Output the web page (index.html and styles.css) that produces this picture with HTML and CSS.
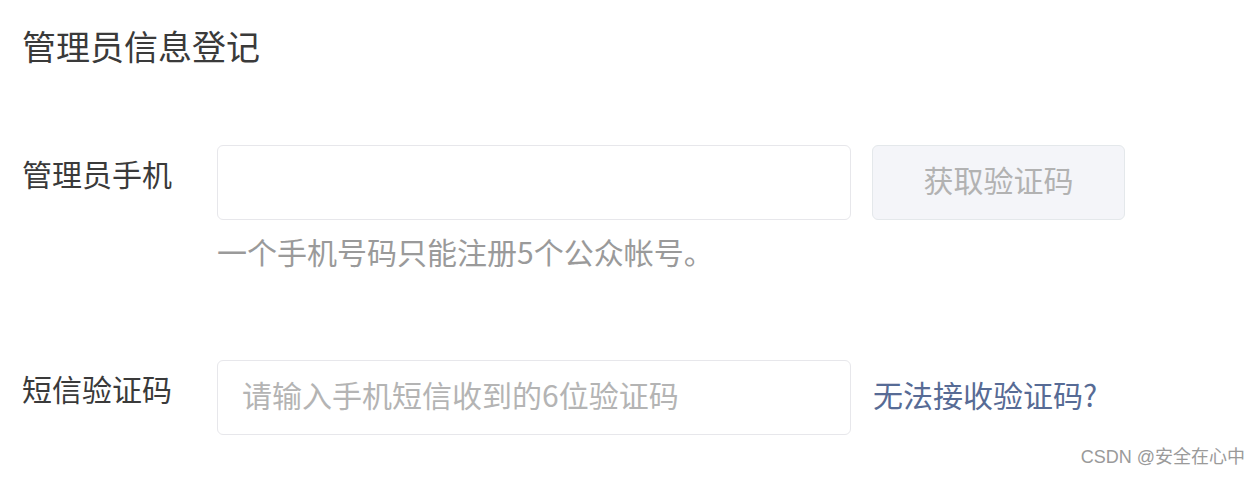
FILE: index.html
```html
<!DOCTYPE html>
<html lang="zh-CN">
<head>
<meta charset="utf-8">
<title>管理员信息登记</title>
<link rel="stylesheet" href="styles.css">
</head>
<body>
<div class="page">
  <h1 class="title">管理员信息登记</h1>
  <div class="form">
    <div class="row row-phone">
      <label class="label">管理员手机</label>
      <div class="field">
        <div class="controls">
          <input class="input" type="text">
          <button class="btn" type="button">获取验证码</button>
        </div>
        <p class="hint">一个手机号码只能注册5个公众帐号。</p>
      </div>
    </div>
    <div class="row row-code">
      <label class="label">短信验证码</label>
      <div class="field">
        <div class="controls">
          <input class="input" type="text" placeholder="请输入手机短信收到的6位验证码">
          <a class="link" href="#">无法接收验证码?</a>
        </div>
      </div>
    </div>
  </div>
</div>
<div class="watermark">CSDN @安全在心中</div>
</body>
</html>
```

FILE: styles.css
```css
html, body {
  margin: 0;
  padding: 0;
  background: #ffffff;
}
body {
  font-family: "Noto Sans CJK SC", "Noto Sans", sans-serif;
  color: #3a3a3a;
  width: 1260px;
  height: 477px;
  position: relative;
  overflow: hidden;
}
.page {
  padding: 26px 0 0 22px;
}
.title {
  margin: 0;
  font-size: 34px;
  font-weight: normal;
  line-height: 40px;
  color: #3a3a3a;
}
.form {
  display: flex;
  flex-direction: column;
  margin-top: 79px;
  gap: 89px;
}
.row {
  display: flex;
  align-items: flex-start;
}
.label {
  width: 195px;
  flex: none;
  font-size: 30px;
  line-height: 40px;
  margin-top: 8px;
  color: #3a3a3a;
}
.field {
  display: flex;
  flex-direction: column;
}
.controls {
  display: flex;
  align-items: center;
}
.input {
  box-sizing: border-box;
  width: 634px;
  height: 75px;
  border: 1px solid #e7e7eb;
  border-radius: 6px;
  padding: 0 24px 8px;
  font-family: inherit;
  font-size: 30px;
  color: #353535;
  outline: none;
  background: #fff;
}
.input::placeholder {
  color: #b4b4b4;
}
.btn {
  box-sizing: border-box;
  margin-left: 21px;
  width: 253px;
  height: 75px;
  border: 1px solid #e4e8eb;
  border-radius: 6px;
  background: #f4f5f9;
  color: #b2b2b2;
  font-family: inherit;
  font-size: 30px;
  padding: 0 0 8px;
}
.hint {
  margin: 11px 0 0;
  font-size: 30px;
  line-height: 40px;
  color: #9a9a9a;
}
.link {
  margin-left: 22px;
  margin-bottom: 8px;
  font-size: 30px;
  line-height: 40px;
  color: #576b95;
  text-decoration: none;
}
.watermark {
  position: absolute;
  right: 15px;
  bottom: 8px;
  font-family: "Liberation Sans", "Noto Sans CJK SC", sans-serif;
  font-size: 18px;
  line-height: 24px;
  color: #9a9a9a;
}
```
